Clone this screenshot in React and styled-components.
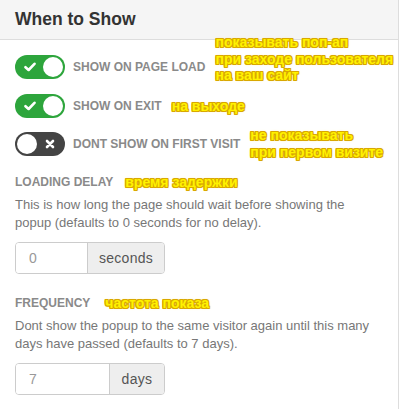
import React from "react";
import styled, { createGlobalStyle } from "styled-components";

const GlobalStyle = createGlobalStyle`
  body {
    margin: 0;
    background: #fff;
    font-family: "Liberation Sans", Arial, sans-serif;
  }
`;

function Toggle({ on }) {
  return (
    <Switch $on={on}>
      {on ? (
        <svg width="12" height="10" viewBox="0 0 12 10">
          <path d="M1.5 5.2 L4.6 8 L10.5 1.8" fill="none" stroke="#fff" strokeWidth="2.6" strokeLinecap="round" strokeLinejoin="round" />
        </svg>
      ) : null}
      <Knob />
      {!on ? (
        <svg width="10" height="10" viewBox="0 0 10 10">
          <path d="M2 2 L8 8 M8 2 L2 8" stroke="#fff" strokeWidth="2.6" strokeLinecap="round" />
        </svg>
      ) : null}
    </Switch>
  );
}

function App() {
  return (
    <>
      <GlobalStyle />
      <Panel>
        <Header>When to Show</Header>
        <Body>
          <ToggleRow>
            <Toggle on />
            <Label>Show on page load</Label>
            <Note $lift>
              показывать поп-ап
              <br />
              при заходе пользователя
              <br />
              на ваш сайт
            </Note>
          </ToggleRow>
          <ToggleRow>
            <Toggle on />
            <Label>Show on exit</Label>
            <Note>на выходе</Note>
          </ToggleRow>
          <ToggleRow>
            <Toggle />
            <Label>Dont show on first visit</Label>
            <Note>
              не показывать
              <br />
              при первом визите
            </Note>
          </ToggleRow>

          <Section>
            <SectionTitle>
              <Label>Loading delay</Label>
              <Note $gap={12}>время задержки</Note>
            </SectionTitle>
            <Help>
              This is how long the page should wait before showing the popup
              (defaults to 0 seconds for no delay).
            </Help>
            <InputGroup>
              <Field $w={72} value="0" readOnly />
              <Addon>seconds</Addon>
            </InputGroup>
          </Section>

          <Section>
            <SectionTitle>
              <Label>Frequency</Label>
              <Note $gap={15}>частота показа</Note>
            </SectionTitle>
            <Help>
              Dont show the popup to the same visitor again until this many
              days have passed (defaults to 7 days).
            </Help>
            <InputGroup>
              <Field $w={94} value="7" readOnly />
              <Addon>days</Addon>
            </InputGroup>
          </Section>
        </Body>
      </Panel>
    </>
  );
}

const Panel = styled.div`
  width: 398px;
  min-height: 100vh;
  border-right: 1px solid #dddddd;
  background: #fff;
`;

const Header = styled.div`
  height: 39px;
  padding-left: 15px;
  display: flex;
  align-items: center;
  background: #f5f5f5;
  border-bottom: 1px solid #dddddd;
  color: #333;
  font-size: 17.5px;
  font-weight: bold;
`;

const Body = styled.div`
  padding: 15px 15px 0 15px;
  display: flex;
  flex-direction: column;
`;

const ToggleRow = styled.div`
  height: 24px;
  display: flex;
  align-items: center;
  margin-bottom: 15px;
  &:nth-child(2) {
    margin-bottom: 14px;
  }
`;

const Switch = styled.div`
  width: 50px;
  height: 24px;
  border-radius: 12px;
  background: ${(p) => (p.$on ? "#2da53c" : "#444444")};
  display: flex;
  align-items: center;
  justify-content: space-between;
  padding: ${(p) => (p.$on ? "0 2px 0 9px" : "0 10px 0 2px")};
  box-sizing: border-box;
  flex-shrink: 0;
`;

const Knob = styled.div`
  width: 20px;
  height: 20px;
  border-radius: 50%;
  background: #fff;
`;

const Label = styled.span`
  margin-left: 8px;
  color: #8a8a8a;
  font-size: 12px;
  font-weight: bold;
  text-transform: uppercase;
  white-space: nowrap;
`;

const Note = styled.div`
  margin-left: ${(p) => (p.$gap || 10) + "px"};
  position: relative;
  top: ${(p) => (p.$lift ? "-8px" : "0")};
  color: #fff200;
  font-size: 14px;
  font-weight: bold;
  line-height: ${(p) => (p.$lift ? "16.5px" : "17px")};
  white-space: nowrap;
  text-shadow:
    1px 0 0 #d9a800,
    -1px 0 0 #d9a800,
    0 1px 0 #d9a800,
    0 -1px 0 #d9a800,
    1px 1px 0 #d9a800,
    -1px -1px 0 #d9a800,
    1px -1px 0 #d9a800,
    -1px 1px 0 #d9a800,
    0 0 3px #f3e27a;
`;

const Section = styled.div`
  margin-top: 2px;
  margin-bottom: 18px;
  &:last-child {
    margin-bottom: 0;
  }
`;

const SectionTitle = styled.div`
  height: 18px;
  display: flex;
  align-items: center;
  ${Label} {
    margin-left: 0;
  }
`;

const Help = styled.p`
  margin: 5px 0 10px;
  color: #777;
  font-size: 13px;
  line-height: 18px;
  width: 368px;
`;

const InputGroup = styled.div`
  display: flex;
  width: 150px;
  height: 32px;
  border: 1px solid #cccccc;
  border-radius: 4px;
  box-sizing: border-box;
  overflow: hidden;
`;

const Field = styled.input`
  width: ${(p) => p.$w - 1}px;
  border: none;
  outline: none;
  padding: 0 0 0 13px;
  box-sizing: border-box;
  color: #999;
  font-family: "Liberation Sans", Arial, sans-serif;
  font-size: 14px;
  background: #fff;
`;

const Addon = styled.div`
  flex: 1;
  display: flex;
  align-items: center;
  justify-content: center;
  background: #eeeeee;
  border-left: 1px solid #cccccc;
  color: #555;
  font-size: 14px;
  letter-spacing: 0.3px;
`;

export default App;
